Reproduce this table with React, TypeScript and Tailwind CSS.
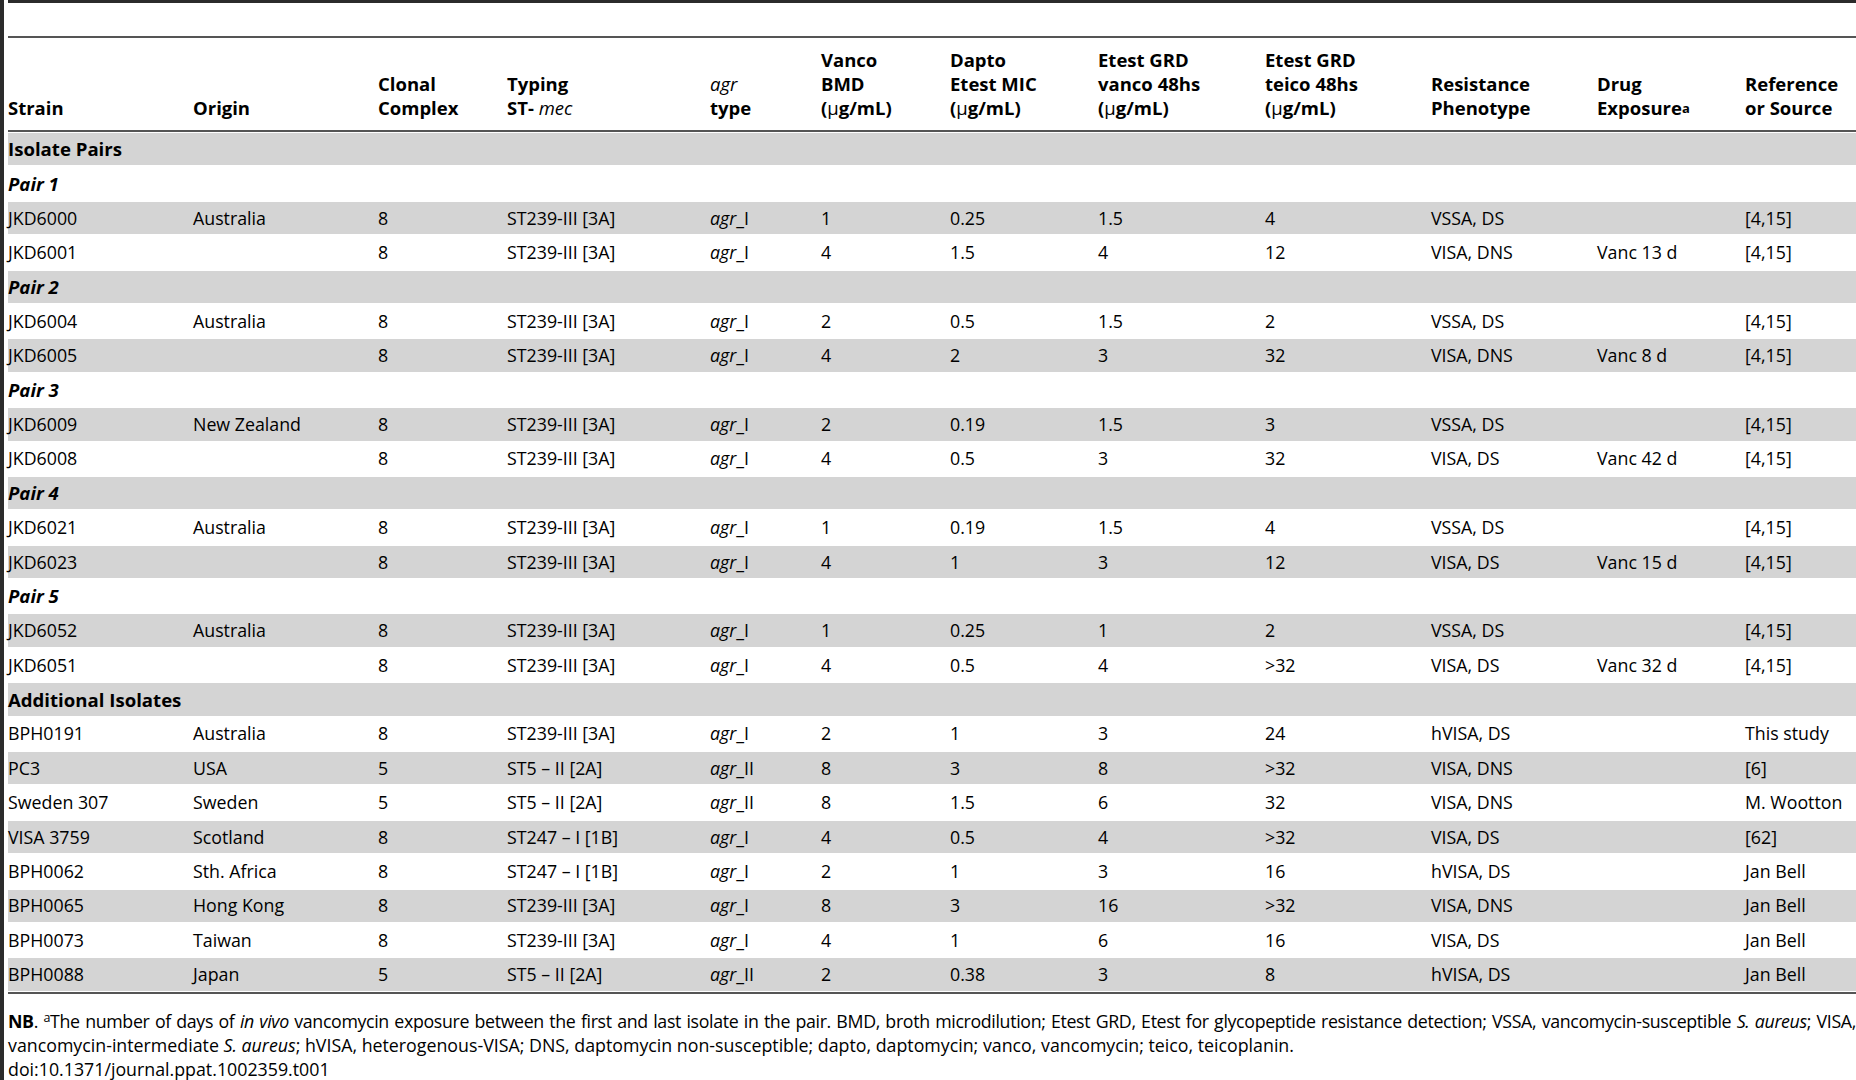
import React from "react";

type Row =
  | { kind: "group"; label: string; italic?: boolean }
  | { kind: "data"; c: string[] };

const rows: Row[] = [
  { kind: "group", label: "Isolate Pairs" },
  { kind: "group", label: "Pair 1", italic: true },
  { kind: "data", c: ["JKD6000", "Australia", "8", "ST239-III [3A]", "I", "1", "0.25", "1.5", "4", "VSSA, DS", "", "[4,15]"] },
  { kind: "data", c: ["JKD6001", "", "8", "ST239-III [3A]", "I", "4", "1.5", "4", "12", "VISA, DNS", "Vanc 13 d", "[4,15]"] },
  { kind: "group", label: "Pair 2", italic: true },
  { kind: "data", c: ["JKD6004", "Australia", "8", "ST239-III [3A]", "I", "2", "0.5", "1.5", "2", "VSSA, DS", "", "[4,15]"] },
  { kind: "data", c: ["JKD6005", "", "8", "ST239-III [3A]", "I", "4", "2", "3", "32", "VISA, DNS", "Vanc 8 d", "[4,15]"] },
  { kind: "group", label: "Pair 3", italic: true },
  { kind: "data", c: ["JKD6009", "New Zealand", "8", "ST239-III [3A]", "I", "2", "0.19", "1.5", "3", "VSSA, DS", "", "[4,15]"] },
  { kind: "data", c: ["JKD6008", "", "8", "ST239-III [3A]", "I", "4", "0.5", "3", "32", "VISA, DS", "Vanc 42 d", "[4,15]"] },
  { kind: "group", label: "Pair 4", italic: true },
  { kind: "data", c: ["JKD6021", "Australia", "8", "ST239-III [3A]", "I", "1", "0.19", "1.5", "4", "VSSA, DS", "", "[4,15]"] },
  { kind: "data", c: ["JKD6023", "", "8", "ST239-III [3A]", "I", "4", "1", "3", "12", "VISA, DS", "Vanc 15 d", "[4,15]"] },
  { kind: "group", label: "Pair 5", italic: true },
  { kind: "data", c: ["JKD6052", "Australia", "8", "ST239-III [3A]", "I", "1", "0.25", "1", "2", "VSSA, DS", "", "[4,15]"] },
  { kind: "data", c: ["JKD6051", "", "8", "ST239-III [3A]", "I", "4", "0.5", "4", ">32", "VISA, DS", "Vanc 32 d", "[4,15]"] },
  { kind: "group", label: "Additional Isolates" },
  { kind: "data", c: ["BPH0191", "Australia", "8", "ST239-III [3A]", "I", "2", "1", "3", "24", "hVISA, DS", "", "This study"] },
  { kind: "data", c: ["PC3", "USA", "5", "ST5 – II [2A]", "II", "8", "3", "8", ">32", "VISA, DNS", "", "[6]"] },
  { kind: "data", c: ["Sweden 307", "Sweden", "5", "ST5 – II [2A]", "II", "8", "1.5", "6", "32", "VISA, DNS", "", "M. Wootton"] },
  { kind: "data", c: ["VISA 3759", "Scotland", "8", "ST247 – I [1B]", "I", "4", "0.5", "4", ">32", "VISA, DS", "", "[62]"] },
  { kind: "data", c: ["BPH0062", "Sth. Africa", "8", "ST247 – I [1B]", "I", "2", "1", "3", "16", "hVISA, DS", "", "Jan Bell"] },
  { kind: "data", c: ["BPH0065", "Hong Kong", "8", "ST239-III [3A]", "I", "8", "3", "16", ">32", "VISA, DNS", "", "Jan Bell"] },
  { kind: "data", c: ["BPH0073", "Taiwan", "8", "ST239-III [3A]", "I", "4", "1", "6", "16", "VISA, DS", "", "Jan Bell"] },
  { kind: "data", c: ["BPH0088", "Japan", "5", "ST5 – II [2A]", "II", "2", "0.38", "3", "8", "hVISA, DS", "", "Jan Bell"] },
];

const GRID =
  "grid grid-cols-[185px_185px_129px_203px_111px_129px_148px_167px_166px_166px_148px_1fr]";

const Mu = () => <span className="font-normal">μ</span>;
const Ug = () => (
  <span>
    (<Mu />g/mL)
  </span>
);

function HeadCell({ lines }: { lines: React.ReactNode[] }) {
  return (
    <div className="flex flex-col justify-end">
      {lines.map((l, i) => (
        <div key={i} className="leading-[24px] whitespace-nowrap">
          {l}
        </div>
      ))}
    </div>
  );
}

export default function App() {
  return (
    <div
      className="flex w-[1856px] h-[1080px] bg-white text-black overflow-hidden"
      style={{ fontFamily: '"Open Sans", "Noto Sans", sans-serif' }}
    >
      <div className="w-[4px] shrink-0 bg-[#2b2b2b]" />
      <div className="w-[4px] shrink-0" />
      <div className="flex-1 min-w-0 flex flex-col text-[17.8px]">
        <div className="h-[3px] shrink-0 bg-[#2b2b2b]" />
        <div className="h-[33px] shrink-0" />
        <div className="h-[2px] shrink-0 bg-[#555]" />
        <div className={`${GRID} shrink-0 font-bold text-[18.5px] pt-[10px] pb-[10px]`}>
          <HeadCell lines={["Strain"]} />
          <HeadCell lines={["Origin"]} />
          <HeadCell lines={["Clonal", "Complex"]} />
          <HeadCell lines={["Typing", <span>ST- <i className="font-normal">mec</i></span>]} />
          <HeadCell lines={[<i className="font-normal">agr</i>, "type"]} />
          <HeadCell lines={["Vanco", "BMD", <Ug />]} />
          <HeadCell lines={["Dapto", "Etest MIC", <Ug />]} />
          <HeadCell lines={["Etest GRD", "vanco 48hs", <Ug />]} />
          <HeadCell lines={["Etest GRD", "teico 48hs", <Ug />]} />
          <HeadCell lines={["Resistance", "Phenotype"]} />
          <HeadCell
            lines={[
              "Drug",
              <span>
                Exposure<sup className="text-[13px] relative -top-[2px]">a</sup>
              </span>,
            ]}
          />
          <HeadCell lines={["Reference", "or Source"]} />
        </div>
        <div className="h-[2px] shrink-0 bg-[#555]" />
        <div className="flex flex-col shrink-0">
          {rows.map((r, i) => {
            const bg = i % 2 === 0 ? "bg-[#d4d4d4]" : "bg-white";
            if (r.kind === "group") {
              return (
                <div key={i} className={`h-[34.4px] shrink-0 flex items-center ${bg} border-y border-white`}>
                  <span className={`font-bold text-[18.6px] ${r.italic ? "italic" : ""}`}>{r.label}</span>
                </div>
              );
            }
            return (
              <div key={i} className={`${GRID} h-[34.4px] shrink-0 items-center ${bg} border-y border-white`}>
                {r.c.map((v, j) => (
                  <div key={j} className="whitespace-nowrap">
                    {j === 4 ? (
                      <span>
                        <i>agr</i>_{v}
                      </span>
                    ) : (
                      v
                    )}
                  </div>
                ))}
              </div>
            );
          })}
        </div>
        <div className="h-[2px] shrink-0 bg-[#555]" />
        <div className="shrink-0 pt-[15px] text-[17.8px] leading-[24px]">
          <div className="whitespace-nowrap text-justify [text-align-last:justify] tracking-[-0.35px]">
            <b>NB</b>. <sup className="text-[12.5px]">a</sup>The number of days of <i>in vivo</i> vancomycin exposure between the first and last isolate in the pair. BMD, broth microdilution; Etest GRD, Etest for glycopeptide resistance detection; VSSA, vancomycin-susceptible <i>S. aureus</i>; VISA,
          </div>
          <div className="whitespace-nowrap">
            vancomycin-intermediate <i>S. aureus</i>; hVISA, heterogenous-VISA; DNS, daptomycin non-susceptible; dapto, daptomycin; vanco, vancomycin; teico, teicoplanin.
          </div>
          <div>doi:10.1371/journal.ppat.1002359.t001</div>
        </div>
      </div>
    </div>
  );
}
